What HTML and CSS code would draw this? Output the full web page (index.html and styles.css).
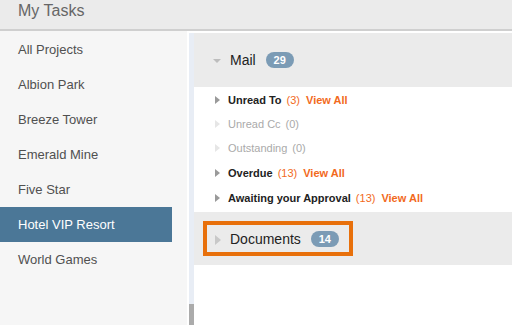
FILE: index.html
```html
<!DOCTYPE html>
<html>
<head>
<meta charset="utf-8">
<link rel="stylesheet" href="styles.css">
</head>
<body>
<header class="top">My Tasks</header>
<div class="layout">
  <nav class="sidebar">
    <div class="nav-item">All Projects</div>
    <div class="nav-item">Albion Park</div>
    <div class="nav-item">Breeze Tower</div>
    <div class="nav-item">Emerald Mine</div>
    <div class="nav-item">Five Star</div>
    <div class="nav-item active">Hotel VIP Resort</div>
    <div class="nav-item">World Games</div>
  </nav>
  <div class="gap"></div>
  <div class="track"><div class="thumb"></div></div>
  <main class="main">
    <section class="sec-head">
      <span class="tri-down"></span>
      <span class="sec-title">Mail</span>
      <span class="badge">29</span>
    </section>
    <ul class="list">
      <li class="row"><span class="tri"></span><b>Unread To</b><span class="count">(3)</span><a class="view">View All</a></li>
      <li class="row off"><span class="tri hollow"></span>Unread Cc<span class="count">(0)</span></li>
      <li class="row off"><span class="tri hollow"></span>Outstanding<span class="count">(0)</span></li>
      <li class="row"><span class="tri"></span><b>Overdue</b><span class="count">(13)</span><a class="view">View All</a></li>
      <li class="row"><span class="tri"></span><b>Awaiting your Approval</b><span class="count">(13)</span><a class="view">View All</a></li>
    </ul>
    <section class="sec-head docs">
      <div class="hl">
        <span class="tri-right"></span>
        <span class="sec-title">Documents</span>
        <span class="badge">14</span>
      </div>
    </section>
  </main>
</div>
</body>
</html>
```
FILE: styles.css
```css
html, body {
  margin: 0;
  padding: 0;
  height: 100%;
  background: #fff;
  font-family: "Liberation Sans", Arial, sans-serif;
  overflow: hidden;
}
.top {
  height: 29px;
  background: #ebebeb;
  border-bottom: 2px solid #cfcfcf;
  color: #666;
  font-size: 16px;
  line-height: 22px;
  padding-left: 18px;
  box-sizing: content-box;
}
.layout {
  display: flex;
  height: 294px;
}
.sidebar {
  width: 187px;
  background: #f6f6f6;
  padding-top: 1px;
}
.nav-item {
  height: 35px;
  line-height: 35px;
  font-size: 13px;
  color: #505050;
  padding-left: 18px;
  width: 154px;
}
.nav-item.active {
  background: #4b7797;
  color: #fff;
}
.gap {
  width: 2px;
  background: #fff;
}
.track {
  width: 5px;
  margin-top: 2px;
  background: #e8edf5;
  display: flex;
  flex-direction: column;
  justify-content: flex-end;
}
.thumb {
  height: 21px;
  background: #ababab;
}
.main {
  flex: 1;
  padding-top: 2px;
  background: #fff;
}
.sec-head {
  height: 54px;
  background: #ebebeb;
  display: flex;
  align-items: center;
  padding-left: 19px;
}
.sec-title {
  font-size: 14px;
  color: #222;
}
.tri-down {
  width: 0;
  height: 0;
  border-left: 4px solid transparent;
  border-right: 4px solid transparent;
  border-top: 4px solid #bdbdbd;
  margin-right: 9px;
  margin-top: 2px;
}
.badge {
  display: inline-block;
  width: 28px;
  height: 16px;
  line-height: 16px;
  border-radius: 8px;
  background: #7b9bb5;
  color: #fff;
  font-size: 11px;
  font-weight: bold;
  text-align: center;
  margin-left: 10px;
}
.list {
  list-style: none;
  margin: 0;
  padding: 0;
  height: 125px;
}
.row {
  height: 25px;
  display: flex;
  align-items: center;
  padding-left: 21px;
  font-size: 11px;
  color: #222;
}
.row b { font-weight: bold; }
.row.off { color: #aaa; height: 24px; }
.tri {
  width: 0;
  height: 0;
  border-top: 4px solid transparent;
  border-bottom: 4px solid transparent;
  border-left: 5px solid #9a9a9a;
  margin-right: 8px;
}
.tri.hollow {
  border-left-color: #e6e6e6;
}
.count {
  margin-left: 5px;
}
.row:not(.off) .count { color: #f26a1d; }
.view {
  margin-left: 6px;
  color: #f26a1d;
  font-weight: bold;
}
.docs {
  height: 53px;
  padding-left: 9px;
}
.hl {
  display: flex;
  align-items: center;
  height: 27px;
  border: 4px solid #e8700b;
  padding-left: 8px;
  padding-right: 10px;
}
.tri-right {
  width: 0;
  height: 0;
  border-top: 5px solid transparent;
  border-bottom: 5px solid transparent;
  border-left: 6px solid #c8c8c8;
  margin-right: 9px;
  margin-top: 2px;
}
.docs .badge { margin-left: 10px; }
```
